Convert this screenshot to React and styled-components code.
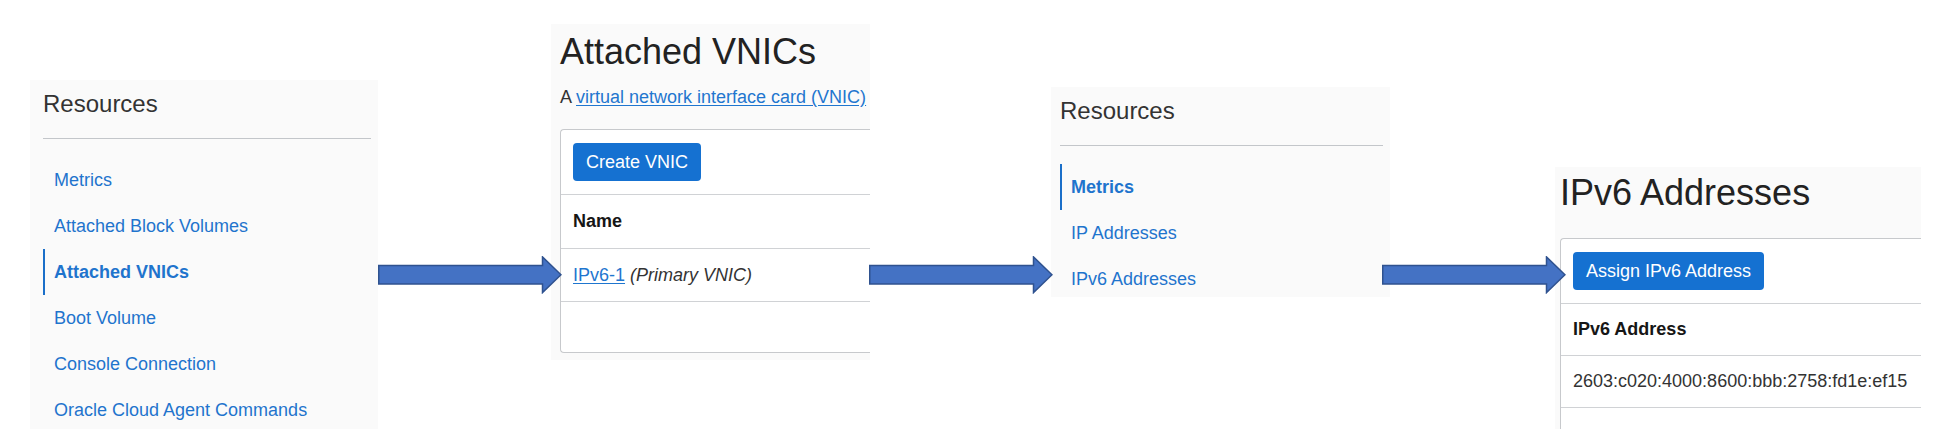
import React from "react";
import styled, { createGlobalStyle } from "styled-components";

const GlobalStyle = createGlobalStyle`
  html, body {
    margin: 0;
    padding: 0;
    background: #ffffff;
  }
  body {
    font-family: "Liberation Sans", Arial, Helvetica, sans-serif;
    overflow: hidden;
  }
`;

const Stage = styled.main`
  display: flex;
  align-items: flex-start;
  width: 1942px;
  height: 429px;
  padding-left: 30px;
  box-sizing: border-box;
  overflow: hidden;
`;

const Panel = styled.section`
  flex: none;
  box-sizing: border-box;
  width: ${(p) => p.$width}px;
  height: ${(p) => p.$height}px;
  margin-top: ${(p) => p.$top}px;
  padding: ${(p) => p.$padTop}px ${(p) => p.$padRight || 0}px 0
    ${(p) => p.$padLeft}px;
  background: #fafafa;
  overflow: hidden;
`;

const ResourcesHeading = styled.h3`
  margin: 0;
  font-size: 24px;
  line-height: 28px;
  font-weight: 400;
  color: #333333;
`;

const Rule = styled.hr`
  margin: 20px 0 0;
  height: 0;
  border: 0;
  border-top: 1px solid #c3c6ca;
`;

const NavList = styled.ul`
  list-style: none;
  margin: 18px 0 0;
  padding: 0;
`;

const NavItem = styled.li`
  display: flex;
  align-items: center;
  height: 46px;
  padding-left: 9px;
  border-left: 2px solid ${(p) => (p.$active ? "#1a6fc9" : "transparent")};
  font-size: 18px;
  font-weight: ${(p) => (p.$active ? 700 : 400)};
  color: #1f74cd;
  white-space: nowrap;
`;

const ArrowSlot = styled.div`
  flex: none;
  position: relative;
  z-index: 2;
  width: 184px;
  height: 38px;
  margin-top: 256px;
  margin-left: ${(p) => p.$ml || 0}px;
  margin-right: ${(p) => p.$mr || 0}px;
  svg {
    display: block;
  }
`;

const PageTitle = styled.h1`
  margin: 0;
  font-size: 36px;
  line-height: 40px;
  font-weight: 400;
  color: #222222;
  white-space: nowrap;
`;

const Intro = styled.p`
  margin: 13px 0 0;
  font-size: 18px;
  line-height: 24px;
  color: #333333;
  white-space: nowrap;
`;

const TextLink = styled.a`
  color: #1f76cf;
  text-decoration: underline;
  text-underline-offset: 2px;
  cursor: pointer;
`;

const Card = styled.div`
  margin-top: ${(p) => p.$offset}px;
  border: 1px solid #c7c9cc;
  border-right: none;
  border-radius: 4px 0 0 4px;
  background: #ffffff;
`;

const Toolbar = styled.div`
  display: flex;
  padding: 13px 12px;
  border-bottom: 1px solid #d0d2d5;
`;

const PrimaryButton = styled.button`
  height: 38px;
  padding: 0 13px;
  border: 0;
  border-radius: 4px;
  background: #1571d1;
  color: #ffffff;
  font-family: inherit;
  font-size: 18px;
  white-space: nowrap;
  cursor: pointer;
`;

const Row = styled.div`
  display: flex;
  align-items: center;
  height: ${(p) => p.$h}px;
  padding: 0 12px;
  border-bottom: ${(p) => (p.$last ? "none" : "1px solid #d0d2d5")};
  font-size: 18px;
  font-weight: ${(p) => (p.$head ? 700 : 400)};
  color: ${(p) => (p.$head ? "#161616" : "#333333")};
  white-space: nowrap;
`;

const Note = styled.em`
  margin-left: 5px;
  color: #333333;
`;

function Arrow({ ml, mr }) {
  return (
    <ArrowSlot $ml={ml} $mr={mr}>
      <svg width="184" height="38" viewBox="0 0 184 38">
        <path
          d="M0.75 9.5 H164.5 V0.9 L183 18.75 L164.5 36.6 V28 H0.75 Z"
          fill="#4472c4"
          stroke="#2f528f"
          strokeWidth="1.5"
          strokeLinejoin="miter"
        />
      </svg>
    </ArrowSlot>
  );
}

function ResourcesMenu({ items, active, ...panel }) {
  return (
    <Panel {...panel}>
      <ResourcesHeading>Resources</ResourcesHeading>
      <Rule />
      <NavList>
        {items.map((item) => (
          <NavItem key={item} $active={item === active}>
            {item}
          </NavItem>
        ))}
      </NavList>
    </Panel>
  );
}

export default function App() {
  return (
    <>
      <GlobalStyle />
      <Stage>
        <ResourcesMenu
          $width={348}
          $height={349}
          $top={80}
          $padTop={10}
          $padLeft={13}
          $padRight={7}
          active="Attached VNICs"
          items={[
            "Metrics",
            "Attached Block Volumes",
            "Attached VNICs",
            "Boot Volume",
            "Console Connection",
            "Oracle Cloud Agent Commands",
          ]}
        />
        <Arrow mr={-11} />
        <Panel $width={319} $height={336} $top={24} $padTop={8} $padLeft={9}>
          <PageTitle>Attached VNICs</PageTitle>
          <Intro>
            A <TextLink>virtual network interface card (VNIC)</TextLink>
          </Intro>
          <Card $offset={20}>
            <Toolbar>
              <PrimaryButton>Create VNIC</PrimaryButton>
            </Toolbar>
            <Row $h={53} $head>
              Name
            </Row>
            <Row $h={52}>
              <TextLink>IPv6-1</TextLink>
              <Note>(Primary VNIC)</Note>
            </Row>
            <Row $h={50} $last />
          </Card>
        </Panel>
        <Arrow ml={-1} mr={-2} />
        <ResourcesMenu
          $width={339}
          $height={210}
          $top={87}
          $padTop={10}
          $padLeft={9}
          $padRight={7}
          active="Metrics"
          items={["Metrics", "IP Addresses", "IPv6 Addresses"]}
        />
        <Arrow ml={-8} mr={-11} />
        <Panel $width={366} $height={262} $top={167} $padTop={6} $padLeft={5}>
          <PageTitle>IPv6 Addresses</PageTitle>
          <Card $offset={25}>
            <Toolbar>
              <PrimaryButton>Assign IPv6 Address</PrimaryButton>
            </Toolbar>
            <Row $h={51} $head>
              IPv6 Address
            </Row>
            <Row $h={51}>2603:c020:4000:8600:bbb:2758:fd1e:ef15</Row>
            <Row $h={51} />
          </Card>
        </Panel>
      </Stage>
    </>
  );
}
